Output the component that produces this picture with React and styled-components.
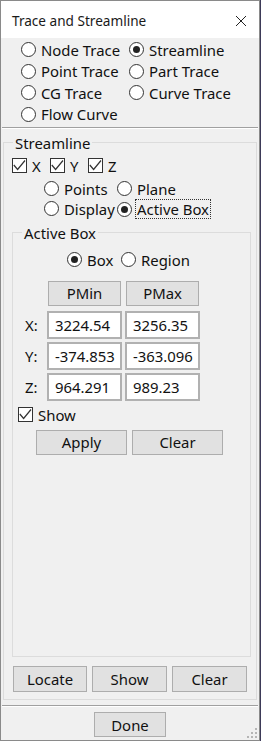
import React from 'react';
import styled, { createGlobalStyle } from 'styled-components';

const GlobalStyle = createGlobalStyle`
  html, body {
    margin: 0;
    padding: 0;
    background: #3d3a58;
  }
  body {
    font-family: "Noto Sans", "Open Sans", sans-serif;
    color: #111;
  }
`;

const FONT = '14.9px';

/**
 * Small win32-like controls
 */
const RadioDot = styled.span`
  box-sizing: border-box;
  flex: none;
  width: 15px;
  height: 15px;
  border-radius: 50%;
  border: 1.3px solid #333;
  background: #fff;
  display: flex;
  align-items: center;
  justify-content: center;

  &::after {
    content: '';
    display: ${(p) => (p.$on ? 'block' : 'none')};
    width: 7px;
    height: 7px;
    border-radius: 50%;
    background: #222;
  }
`;

const CheckBox = styled.span`
  box-sizing: border-box;
  flex: none;
  width: 15px;
  height: 15px;
  border: 1.3px solid #333;
  background: #fff;
  display: flex;
  align-items: center;
  justify-content: center;
`;

const Choice = styled.label`
  display: flex;
  align-items: center;
  gap: ${(p) => p.$gap || 5}px;
  width: ${(p) => (p.$w ? `${p.$w}px` : 'auto')};
  height: ${(p) => p.$h || 20}px;
  font-size: ${FONT};
  white-space: nowrap;
`;

const FocusText = styled.span`
  box-sizing: border-box;
  height: 20px;
  line-height: 18px;
  padding: 0 1px;
  border: 1px dotted #333;
`;

const Radio = ({ on, label, w, focus }) => (
  <Choice $w={w} $h={focus ? 21 : 20} $gap={focus ? 3 : 5}>
    <RadioDot $on={on} />
    {focus ? <FocusText>{label}</FocusText> : <span>{label}</span>}
  </Choice>
);

const Check = ({ label, w }) => (
  <Choice $w={w}>
    <CheckBox>
      <svg width="13" height="13" viewBox="0 0 13 13">
        <polyline points="0.8,6 4.6,10.5 12,1.5" fill="none" stroke="#333" strokeWidth="1.2" />
      </svg>
    </CheckBox>
    <span>{label}</span>
  </Choice>
);

const App = () => {
  return (
    <>
      <GlobalStyle />
      <Window>
        <TitleBar>
          <Title>Trace and Streamline</Title>
          <CloseIcon width="12" height="12" viewBox="0 0 12 12">
            <path d="M1 1 L11 11 M11 1 L1 11" stroke="#222" strokeWidth="1" />
          </CloseIcon>
        </TitleBar>

        <ModeGrid>
          <Radio label="Node Trace" />
          <Radio on label="Streamline" />
          <Radio label="Point Trace" />
          <Radio label="Part Trace" />
          <Radio label="CG Trace" />
          <Radio label="Curve Trace" />
          <Radio label="Flow Curve" />
        </ModeGrid>

        <Separator />

        <OuterGroup>
          <Legend>Streamline</Legend>
          <AxisRow>
            <Check label="X" w={38} />
            <Check label="Y" w={38} />
            <Check label="Z" w={38} />
          </AxisRow>
          <SeedGrid>
            <Radio label="Points" w={73} />
            <Radio label="Plane" />
            <Radio label="Display" w={73} />
            <Radio on focus label="Active Box" />
          </SeedGrid>

          <InnerGroup>
            <Legend>Active Box</Legend>
            <ShapeRow>
              <Radio on label="Box" w={54} />
              <Radio label="Region" />
            </ShapeRow>

            <CoordGrid>
              <span />
              <HeadButton>PMin</HeadButton>
              <HeadButton>PMax</HeadButton>

              <AxisLabel>X:</AxisLabel>
              <Field>3224.54</Field>
              <Field>3256.35</Field>

              <AxisLabel>Y:</AxisLabel>
              <Field>-374.853</Field>
              <Field>-363.096</Field>

              <AxisLabel>Z:</AxisLabel>
              <Field>964.291</Field>
              <Field>989.23</Field>
            </CoordGrid>

            <ShowRow>
              <Check label="Show" />
            </ShowRow>

            <ApplyRow>
              <Button $w={91}>Apply</Button>
              <Button $w={91}>Clear</Button>
            </ApplyRow>
          </InnerGroup>

          <ActionRow>
            <Button $w={74} $h={26}>Locate</Button>
            <Button $w={75} $h={26}>Show</Button>
            <Button $w={75} $h={26}>Clear</Button>
          </ActionRow>
        </OuterGroup>

        <Separator $top={5} />

        <FooterRow>
          <Button $w={72}>Done</Button>
        </FooterRow>

        <Grip width="12" height="12" viewBox="0 0 12 12">
          {[[10, 2], [10, 6], [6, 6], [10, 10], [6, 10], [2, 10]].map(([x, y], i) => (
            <rect key={i} x={x - 1} y={y - 1} width="2" height="2" fill="#b5b5b5" />
          ))}
        </Grip>
      </Window>
    </>
  );
};

// Styled components
const Window = styled.div`
  position: relative;
  box-sizing: border-box;
  width: 260px;
  height: 741px;
  border: 1px solid #8a8a8a;
  background: #f0f0f0;
  display: flex;
  flex-direction: column;
`;

const TitleBar = styled.div`
  flex: none;
  height: 37px;
  background: #fff;
  display: flex;
  align-items: center;
  justify-content: space-between;
  padding: 0 12px 0 11px;
`;

const Title = styled.div`
  font-size: 13.6px;
  color: #1a1a1a;
  padding-top: 1px;
`;

const CloseIcon = styled.svg`
  margin-top: 2px;
`;

const ModeGrid = styled.div`
  display: grid;
  grid-template-columns: 108px auto;
  grid-auto-rows: 21.4px;
  align-items: center;
  padding: 1.3px 0 0 20px;
`;

const Separator = styled.div`
  flex: none;
  margin: ${(p) => p.$top || 2}px 1px 0;
  height: 0;
  border-top: 1px solid #a0a0a0;
  border-bottom: 1px solid #fff;
`;

const OuterGroup = styled.fieldset`
  flex: 1;
  display: flex;
  flex-direction: column;
  min-width: 0;
  margin: 4px 2px 0;
  padding: 0 0 7px;
  border: 1px solid #dcdcdc;
`;

const Legend = styled.legend`
  margin-left: 9px;
  padding: 0 2px;
  font-size: ${FONT};
  line-height: 20px;
`;

const AxisRow = styled.div`
  display: flex;
  margin-top: 3px;
  padding-left: 8px;
`;

const SeedGrid = styled.div`
  display: grid;
  grid-template-columns: 73px auto;
  margin-top: 3px;
  padding-left: 40px;
`;

const InnerGroup = styled.fieldset`
  flex: 1;
  min-width: 0;
  margin: 3px 5px 0 8px;
  padding: 0;
  border: 1px solid #dcdcdc;
`;

const ShapeRow = styled.div`
  display: flex;
  margin-top: 7px;
  padding-left: 54px;
`;

const CoordGrid = styled.div`
  display: grid;
  grid-template-columns: 31px 75px 75px;
  grid-template-rows: 27px 28px 28px 28px;
  column-gap: 3px;
  row-gap: 3px;
  margin-top: 11px;
`;

const AxisLabel = styled.span`
  display: flex;
  align-items: center;
  padding-left: 12px;
  font-size: ${FONT};
`;

const Field = styled.div`
  box-sizing: border-box;
  display: flex;
  align-items: center;
  padding-left: 6px;
  background: #fff;
  border: 2px solid #b1b1b1;
  font-size: ${FONT};
`;

const Button = styled.div`
  box-sizing: border-box;
  width: ${(p) => (p.$w ? `${p.$w}px` : 'auto')};
  height: ${(p) => p.$h || 25}px;
  display: flex;
  align-items: center;
  justify-content: center;
  background: #e1e1e1;
  border: 1px solid #adadad;
  font-size: ${FONT};
`;

const HeadButton = styled(Button)`
  align-self: start;
  margin: 0 1px;
`;

const ShowRow = styled.div`
  display: flex;
  margin-top: 4px;
  padding-left: 5px;
`;

const ApplyRow = styled.div`
  display: flex;
  gap: 5px;
  margin-top: 5px;
  padding-left: 23px;
`;

const ActionRow = styled.div`
  display: flex;
  gap: 5px;
  margin-top: 9px;
  padding-left: 9px;
`;

const FooterRow = styled.div`
  display: flex;
  justify-content: center;
  margin-top: 5px;
  padding-bottom: 3px;
`;

const Grip = styled.svg`
  position: absolute;
  right: 1px;
  bottom: 1px;
`;

export default App;
